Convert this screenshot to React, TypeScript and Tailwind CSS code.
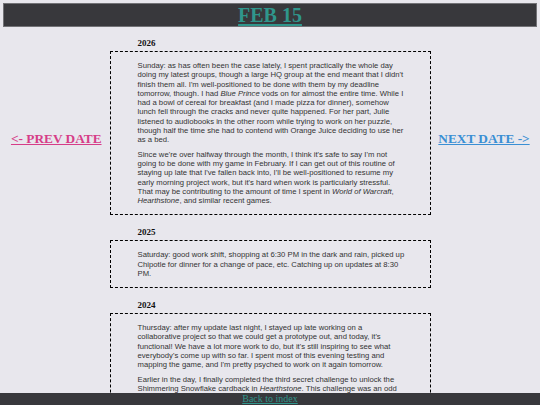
import type { ReactNode } from "react";

type Entry = {
  year: string;
  paragraphs: ReactNode[];
};

const entries: Entry[] = [
  {
    year: "2026",
    paragraphs: [
      <>
        Sunday: as has often been the case lately, I spent practically the whole day doing my latest
        groups, though a large HQ group at the end meant that I didn't finish them all. I'm
        well-positioned to be done with them by my deadline tomorrow, though. I had{" "}
        <i>Blue Prince</i> vods on for almost the entire time. While I had a bowl of cereal for
        breakfast (and I made pizza for dinner), somehow lunch fell through the cracks and never
        quite happened. For her part, Julie listened to audiobooks in the other room while trying to
        work on her puzzle, though half the time she had to contend with Orange Juice deciding to use
        her as a bed.
      </>,
      <>
        Since we're over halfway through the month, I think it's safe to say I'm not going to be done
        with my game in February. If I can get out of this routine of staying up late that I've
        fallen back into, I'll be well-positioned to resume my early morning project work, but it's
        hard when work is particularly stressful. That may be contributing to the amount of time I
        spent in <i>World of Warcraft</i>, <i>Hearthstone</i>, and similar recent games.
      </>,
    ],
  },
  {
    year: "2025",
    paragraphs: [
      <>
        Saturday: good work shift, shopping at 6:30 PM in the dark and rain, picked up Chipotle for
        dinner for a change of pace, etc. Catching up on updates at 8:30 PM.
      </>,
    ],
  },
  {
    year: "2024",
    paragraphs: [
      <>
        Thursday: after my update last night, I stayed up late working on a collaborative project so
        that we could get a prototype out, and today, it's functional! We have a lot more work to do,
        but it's still inspiring to see what everybody's come up with so far. I spent most of this
        evening testing and mapping the game, and I'm pretty psyched to work on it again tomorrow.
      </>,
      <>
        Earlier in the day, I finally completed the third secret challenge to unlock the Shimmering
        Snowflake cardback in <i>Hearthstone</i>. This challenge was an odd one, and it took a few
        tries before everything lined up the way it needed to.
      </>,
    ],
  },
];

function EntryBlock({ entry, first }: { entry: Entry; first: boolean }) {
  return (
    <section className={first ? "mt-[11px]" : "mt-[12px]"}>
      <h4 className="ml-[28px] mb-[3px] text-[9px] leading-[10px] font-bold text-[#111]">
        {entry.year}
      </h4>
      <div className="border border-dashed border-black pl-[27px] pr-[22.5px] py-[9px] flex flex-col gap-[5.5px] font-['Liberation_Sans',Arial,sans-serif] text-[7.7px] leading-[9.25px] text-[#333]">
        {entry.paragraphs.map((p, i) => (
          <p key={i}>{p}</p>
        ))}
      </div>
    </section>
  );
}

export default function App() {
  return (
    <div className="min-h-screen bg-[#e8e7ed] px-[3px] pt-[3px] pb-[20px] font-['Liberation_Serif','Times_New_Roman',serif]">
      {/* Title bar */}
      <header className="h-[24px] border border-[#727276] bg-[#38383c] flex items-center justify-center">
        <a
          href="#"
          className="text-[20px] leading-none font-bold text-[#2f968c] underline decoration-[2px] underline-offset-[2px]"
        >
          FEB 15
        </a>
      </header>

      <div className="flex">
        <nav className="w-[106.5px] flex justify-center pt-[104px]">
          <a href="#" className="text-[13.3px] leading-[15px] font-bold text-[#d63d88] underline">
            &lt;- PREV DATE
          </a>
        </nav>

        <main className="w-[321.5px]">
          {entries.map((entry, i) => (
            <EntryBlock key={entry.year} entry={entry} first={i === 0} />
          ))}
        </main>

        <nav className="flex-1 flex justify-center pt-[104px]">
          <a href="#" className="text-[13.3px] leading-[15px] font-bold text-[#3a8fd4] underline">
            NEXT DATE -&gt;
          </a>
        </nav>
      </div>

      {/* Footer link */}
      <footer className="fixed bottom-0 left-0 right-0 h-[12px] bg-[#38383c] flex items-center justify-center">
        <a href="#" className="text-[10px] leading-none text-[#2f968c] underline">
          Back to index
        </a>
      </footer>
    </div>
  );
}
